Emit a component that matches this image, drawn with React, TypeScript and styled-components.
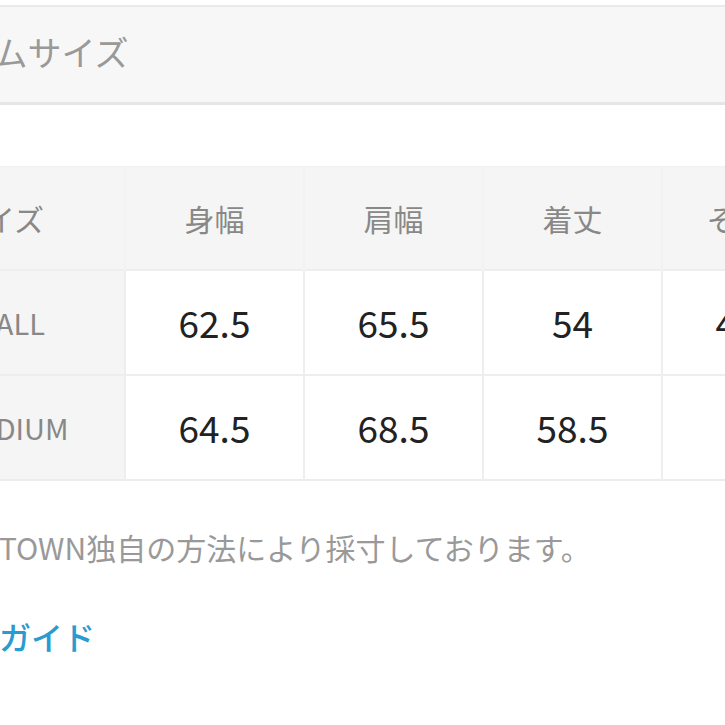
import React from 'react';
import styled, { createGlobalStyle } from 'styled-components';

const GlobalStyle = createGlobalStyle`
  html, body {
    margin: 0;
    padding: 0;
    background: #fff;
    overflow: hidden;
  }
  body {
    font-family: 'Noto Sans CJK JP', 'Noto Sans', sans-serif;
  }
`;

const Page = styled.div`
  width: 1000px;
  margin-left: -101px;
  padding-top: 5px;
`;

const TitleBox = styled.div`
  height: 100px;
  box-sizing: border-box;
  padding-bottom: 6px;
  display: flex;
  align-items: center;
  background: #f7f7f7;
  border-top: 2px solid #e9e9e9;
  border-bottom: 3px solid #e6e6e6;
  font-size: 34px;
  color: #999;
  margin-left: -4px;
`;

const Table = styled.table`
  margin-top: 61px;
  border-collapse: collapse;
  table-layout: fixed;
  border-top: 1px solid #f1f1f1;
  border-bottom: 2px solid #ececec;
`;

const HeadRow = styled.tr`
  height: 103px;
  background: #f5f5f5;
`;

const Row = styled.tr`
  height: 105px;
  border-top: 2px solid #eeeeee;
`;

const LabelCell = styled.th<{ $head?: boolean }>`
  width: 169px;
  padding: 0 0 0 56px;
  text-align: left;
  font-weight: 400;
  font-size: ${p => (p.$head ? 30 : 29)}px;
  color: #888;
  background: #f5f5f5;
`;

const HeadCell = styled.th`
  width: 177px;
  padding: 0;
  text-align: center;
  font-weight: 400;
  font-size: 30px;
  color: #888;
  border-left: 2px solid #f2f2f2;
`;

const Cell = styled.td`
  width: 177px;
  padding: 0;
  text-align: center;
  font-size: 37px;
  color: #222;
  background: #fff;
  border-left: 2px solid #eeeeee;
`;

const Note = styled.p`
  margin: 44px 0 0 -8px;
  font-size: 30px;
  color: #999;
  white-space: nowrap;
`;

const Guide = styled.a`
  display: block;
  margin: 44px 0 0 5px;
  font-size: 32px;
  font-weight: 500;
  color: #2a9bd0;
  text-decoration: none;
`;

const columns = ['身幅', '肩幅', '着丈', 'そで丈'];

const rows = [
  { size: 'SMALL', values: ['62.5', '65.5', '54', '47.5'] },
  { size: 'MEDIUM', values: ['64.5', '68.5', '58.5', '50'] },
];

export default function App() {
  return (
    <>
      <GlobalStyle />
      <Page>
        <TitleBox>アイテムサイズ</TitleBox>
        <Table>
          <thead>
            <HeadRow>
              <LabelCell $head>サイズ</LabelCell>
              {columns.map(c => (
                <HeadCell key={c}>{c}</HeadCell>
              ))}
            </HeadRow>
          </thead>
          <tbody>
            {rows.map(r => (
              <Row key={r.size}>
                <LabelCell>{r.size}</LabelCell>
                {r.values.map((v, i) => (
                  <Cell key={i}>{v}</Cell>
                ))}
              </Row>
            ))}
          </tbody>
        </Table>
        <Note>※ZOZOTOWN独自の方法により採寸しております。</Note>
        <Guide href="#">サイズガイド</Guide>
      </Page>
    </>
  );
}
